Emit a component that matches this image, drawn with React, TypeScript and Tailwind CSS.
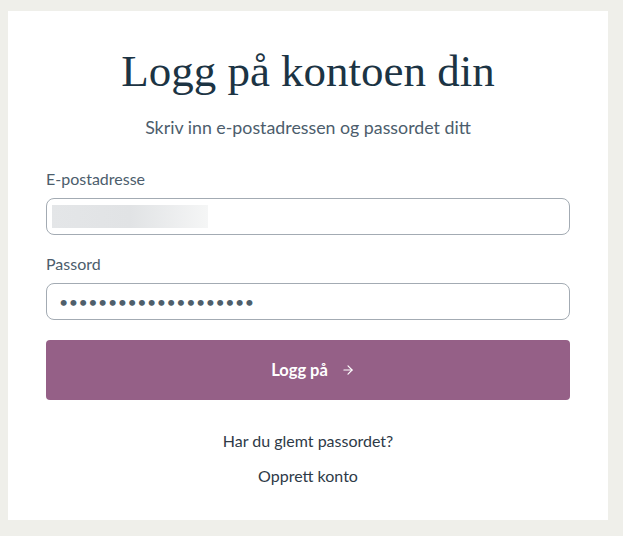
import { ArrowRight } from "lucide-react";

const App = () => {
    return (
        <div className="min-h-[536px] w-full bg-[#efefea] pt-[11px] pl-[8px] pr-[15px]" style={{ fontFamily: "Lato, 'Open Sans', sans-serif" }}>
            <div className="w-[600px] h-[509px] bg-white flex flex-col px-[38px] pt-[30px]">
                <h1 className="text-center text-[45px] leading-[60px] text-[#1c3444]" style={{ fontFamily: "'Liberation Serif', serif" }}>
                    Logg på kontoen din
                </h1>
                <p className="mt-[16px] text-center text-[17.8px] leading-[20px] text-[#4c5d6c]">
                    Skriv inn e-postadressen og passordet ditt
                </p>

                <label className="mt-[32px] text-[16px] leading-[20px] text-[#4c5d6c]">E-postadresse</label>
                <div className="mt-[9px] h-[37px] rounded-lg border border-[#a3abb3] flex items-center px-[5px]">
                    <div className="h-[23px] w-[156px] bg-gradient-to-r from-[#e4e6e8] via-[#e1e3e5] to-[#f5f6f6]" />
                </div>

                <label className="mt-[19px] text-[16px] leading-[20px] text-[#4c5d6c]">Passord</label>
                <div className="mt-[9px] h-[37px] rounded-lg border border-[#a3abb3] flex items-center pl-[12px] text-[#4f5f6b] text-[16px] tracking-[0.5px]">
                    ••••••••••••••••••••
                </div>

                <button className="mt-[20px] h-[60px] rounded bg-[#956087] text-white font-bold text-[16.5px] flex items-center justify-center gap-[13px] pl-[10px]">
                    Logg på
                    <ArrowRight size={14} strokeWidth={2} />
                </button>

                <a className="mt-[31px] text-center text-[16px] leading-[20px] text-[#2e3a47]">Har du glemt passordet?</a>
                <a className="mt-[15px] text-center text-[16px] leading-[20px] text-[#2e3a47]">Opprett konto</a>
            </div>
        </div>
    );
};

export default App;
